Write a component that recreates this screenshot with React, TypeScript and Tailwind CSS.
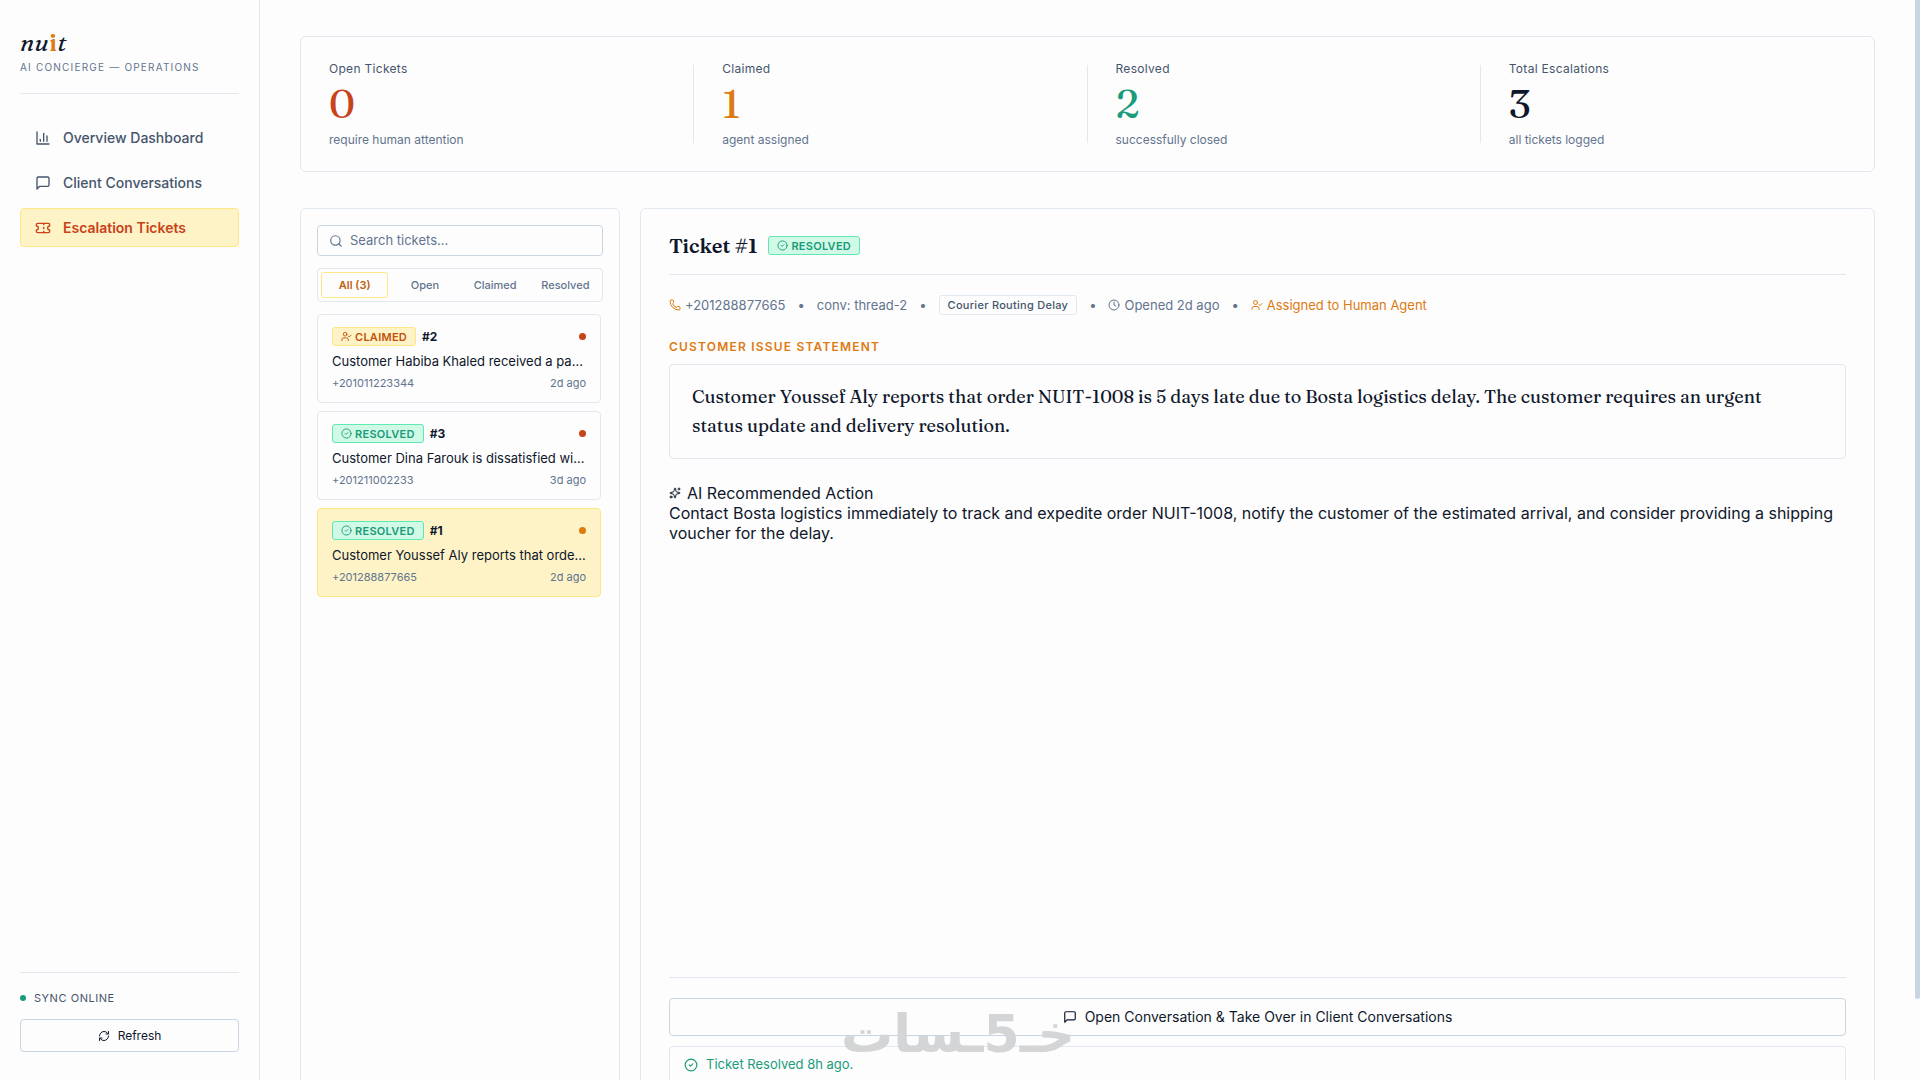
import { useState } from "react";
import type { ReactNode } from "react";
import { CircleCheck, Clock, Phone, RefreshCw, Search, Sparkles, Ticket, UserCheck } from "lucide-react";

type Status = "claimed" | "resolved";

type TicketItem = {
  id: number;
  status: Status;
  summary: string;
  phone: string;
  age: string;
  dot: string;
};

const TICKETS: TicketItem[] = [
  { id: 2, status: "claimed", summary: "Customer Habiba Khaled received a pa…", phone: "+201011223344", age: "2d ago", dot: "bg-[#c8421a]" },
  { id: 3, status: "resolved", summary: "Customer Dina Farouk is dissatisfied wi…", phone: "+201211002233", age: "3d ago", dot: "bg-[#c8421a]" },
  { id: 1, status: "resolved", summary: "Customer Youssef Aly reports that orde…", phone: "+201288877665", age: "2d ago", dot: "bg-[#dd7a10]" },
];

const STATS = [
  { label: "Open Tickets", value: 0, note: "require human attention", color: "text-[#c8421a]" },
  { label: "Claimed", value: 1, note: "agent assigned", color: "text-[#dd7a10]" },
  { label: "Resolved", value: 2, note: "successfully closed", color: "text-[#1a9b7b]" },
  { label: "Total Escalations", value: 3, note: "all tickets logged", color: "text-slate-900" },
];

const FILTERS = ["All (3)", "Open", "Claimed", "Resolved"];

function ChartIcon() {
  return (
    <svg width="16" height="16" viewBox="0 0 24 24" fill="none" stroke="currentColor" strokeWidth="2" strokeLinecap="round" strokeLinejoin="round">
      <path d="M3 3v18h18" />
      <path d="M18 17V9" />
      <path d="M13 17V5" />
      <path d="M8 17v-3" />
    </svg>
  );
}

function MessageIcon({ size }: { size: number }) {
  return (
    <svg width={size} height={size} viewBox="0 0 24 24" fill="none" stroke="currentColor" strokeWidth="2" strokeLinecap="round" strokeLinejoin="round">
      <path d="M21 15a2 2 0 0 1-2 2H7l-4 4V5a2 2 0 0 1 2-2h14a2 2 0 0 1 2 2z" />
    </svg>
  );
}

function StatusBadge({ status }: { status: Status }) {
  const resolved = status === "resolved";
  return (
    <span
      className={`inline-flex h-[19px] items-center gap-[3px] rounded-[3px] border px-2 text-[11px] leading-4 font-semibold tracking-wide ${
        resolved ? "border-emerald-300 bg-emerald-100 text-[#1a9b7b]" : "border-amber-200 bg-amber-100 text-[#c2510c]"
      }`}
    >
      {resolved ? <CircleCheck size={11} /> : <UserCheck size={11} />}
      {resolved ? "RESOLVED" : "CLAIMED"}
    </span>
  );
}

function NavItem({ icon, label, active }: { icon: ReactNode; label: string; active?: boolean }) {
  return (
    <a
      href="#"
      className={`flex h-[39px] items-center gap-3 rounded border px-3.5 text-sm ${
        active ? "border-amber-200 bg-amber-100 font-semibold text-[#c8421a]" : "border-transparent font-medium text-slate-600"
      }`}
    >
      {icon}
      {label}
    </a>
  );
}

function Sidebar() {
  return (
    <aside className="flex w-[260px] shrink-0 flex-col border-r border-slate-200 px-5 pt-7 pb-7">
      <div className="border-b border-slate-200 pb-[19px]">
        <div className="font-['Fraunces','Liberation_Serif',serif] text-2xl leading-[30px] font-medium tracking-[0.02em] italic">
          nu<span className="font-semibold text-[#dd7a10] not-italic">i</span>t
        </div>
        <div className="mt-0.5 text-[10px] leading-[14px] tracking-[0.12em] text-slate-500">AI CONCIERGE — OPERATIONS</div>
      </div>
      <nav className="mt-6 flex flex-col gap-1.5">
        <NavItem icon={<ChartIcon />} label="Overview Dashboard" />
        <NavItem icon={<MessageIcon size={16} />} label="Client Conversations" />
        <NavItem icon={<Ticket size={16} />} label="Escalation Tickets" active />
      </nav>
      <div className="mt-auto border-t border-slate-200 pt-[17px]">
        <div className="flex items-center gap-2 text-[11px] leading-4 tracking-wider text-slate-600">
          <span className="size-1.5 rounded-full bg-[#1a9b7b]" />
          SYNC ONLINE
        </div>
        <button className="mt-[13px] flex h-[33px] w-full items-center justify-center gap-2 rounded border border-slate-300 text-xs">
          <RefreshCw size={12} />
          Refresh
        </button>
      </div>
    </aside>
  );
}

function Stats() {
  return (
    <section className="grid grid-cols-4 rounded-md border border-slate-200">
      {STATS.map((s) => (
        <div
          key={s.label}
          className="relative px-7 py-6 after:absolute after:inset-y-7 after:right-0 after:w-px after:bg-slate-200 last:after:hidden"
        >
          <div className="text-xs leading-[15px] tracking-wide text-slate-600">{s.label}</div>
          <div className={`my-1.5 font-['Fraunces','Liberation_Serif',serif] text-[40px] leading-[44px] font-medium ${s.color}`}>
            {s.value}
          </div>
          <div className="text-xs leading-[15px] text-slate-500">{s.note}</div>
        </div>
      ))}
    </section>
  );
}

function TicketList({ selected, onSelect }: { selected: number; onSelect: (id: number) => void }) {
  const [filter, setFilter] = useState(FILTERS[0]);

  return (
    <section className="flex w-[320px] shrink-0 flex-col gap-3 rounded-md border border-slate-200 p-4">
      <label className="flex h-[31px] items-center gap-[7px] rounded border border-slate-300 px-[11px] text-slate-500">
        <Search size={14} className="shrink-0" />
        <input
          type="text"
          aria-label="Search tickets"
          placeholder="Search tickets..."
          className="w-full bg-transparent text-[13px] outline-none placeholder:text-slate-500"
        />
      </label>
      <div className="grid grid-cols-4 gap-[3px] rounded border border-slate-200 p-[3px]">
        {FILTERS.map((f) => (
          <button
            key={f}
            onClick={() => setFilter(f)}
            className={`h-[26px] rounded-[3px] border text-[11px] ${
              f === filter ? "border-amber-200 font-semibold text-[#c2610c]" : "border-transparent font-medium text-slate-500"
            }`}
          >
            {f}
          </button>
        ))}
      </div>
      <div className="flex flex-col gap-2 pr-0.5">
        {TICKETS.map((t) => (
          <button
            key={t.id}
            onClick={() => onSelect(t.id)}
            className={`flex flex-col gap-1.5 rounded border px-3.5 py-3 text-left ${
              t.id === selected ? "border-amber-200 bg-amber-100" : "border-slate-200"
            }`}
          >
            <span className="flex w-full items-center gap-1.5">
              <StatusBadge status={t.status} />
              <span className="text-xs leading-[19px] font-bold">#{t.id}</span>
              <span className={`ml-auto size-[7px] rounded-full ${t.dot}`} />
            </span>
            <span className="w-full truncate text-[13px] leading-[18px]">{t.summary}</span>
            <span className="flex w-full justify-between text-[11px] leading-[14px] text-slate-500">
              <span>{t.phone}</span>
              <span>{t.age}</span>
            </span>
          </button>
        ))}
      </div>
    </section>
  );
}

function TicketDetail() {
  return (
    <section className="flex min-w-0 flex-1 flex-col rounded-md border border-slate-200 px-7 pt-6 pb-11">
      <header className="flex items-center gap-[11px] border-b border-slate-200 pb-4">
        <h1 className="font-['Fraunces','Liberation_Serif',serif] text-xl leading-[25px] font-semibold">Ticket #1</h1>
        <StatusBadge status="resolved" />
      </header>

      <div className="mt-5 flex items-center gap-3 text-[13px] leading-5 text-slate-500">
        <span className="flex items-center gap-1">
          <Phone size={12} className="text-[#dd7a10]" />
          +201288877665
        </span>
        <span>•</span>
        <span>conv: thread-2</span>
        <span>•</span>
        <span className="rounded-[3px] border border-slate-200 px-2 text-[11px] leading-[18px] font-medium tracking-wide text-slate-600">
          Courier Routing Delay
        </span>
        <span>•</span>
        <span className="flex items-center gap-1">
          <Clock size={12} />
          Opened 2d ago
        </span>
        <span>•</span>
        <span className="flex items-center gap-1 text-[#dd7a10]">
          <UserCheck size={12} />
          Assigned to Human Agent
        </span>
      </div>

      <h2 className="mt-6 text-xs leading-[15px] font-semibold tracking-widest text-[#dd7a10]">CUSTOMER ISSUE STATEMENT</h2>
      <p className="mt-2.5 rounded border border-slate-200 pt-[17px] pr-10 pb-[18px] pl-[22px] font-['Fraunces','Liberation_Serif',serif] text-lg leading-[29px] font-medium">
        Customer Youssef Aly reports that order NUIT-1008 is 5 days late due to Bosta logistics delay. The customer requires an
        urgent status update and delivery resolution.
      </p>

      <div className="mt-6 leading-5">
        <div className="flex items-center gap-1.5">
          <Sparkles size={12} />
          AI Recommended Action
        </div>
        <p>
          Contact Bosta logistics immediately to track and expedite order NUIT-1008, notify the customer of the estimated
          arrival, and consider providing a shipping voucher for the delay.
        </p>
      </div>

      <footer className="mt-auto flex flex-col gap-2.5 border-t border-slate-200 pt-5">
        <button className="flex h-[38px] items-center justify-center gap-2 rounded border border-slate-300 text-sm">
          <MessageIcon size={14} />
          Open Conversation &amp; Take Over in Client Conversations
        </button>
        <div className="flex h-[38px] items-center gap-2 rounded border border-slate-200 px-3.5 text-[13px] text-[#1a9b7b]">
          <CircleCheck size={14} />
          Ticket Resolved 8h ago.
        </div>
      </footer>
    </section>
  );
}

// brand mark stamped over the bottom of the window
function Watermark() {
  return (
    <div
      dir="rtl"
      className="pointer-events-none fixed bottom-[22px] left-[844px] flex w-[231px] items-end justify-between font-['DejaVu_Sans',sans-serif] text-[52px] leading-[48px] font-bold text-[#d4d5d6]"
    >
      <span>خـ</span>
      <span>5</span>
      <span>ـسات</span>
    </div>
  );
}

export default function App() {
  const [selected, setSelected] = useState(1);

  return (
    <div className="flex h-screen overflow-hidden bg-[#fdfdfd] font-['Inter',sans-serif] text-slate-900">
      <Sidebar />
      <main className="min-w-0 flex-1 px-10 pt-9">
        <Stats />
        <div className="mt-9 flex h-[calc(100vh-159px)] gap-5">
          <TicketList selected={selected} onSelect={setSelected} />
          <TicketDetail />
        </div>
      </main>
      <div className="w-[5px] shrink-0">
        <div className="h-[92.5%] rounded-b bg-slate-300" />
      </div>
      <Watermark />
    </div>
  );
}
